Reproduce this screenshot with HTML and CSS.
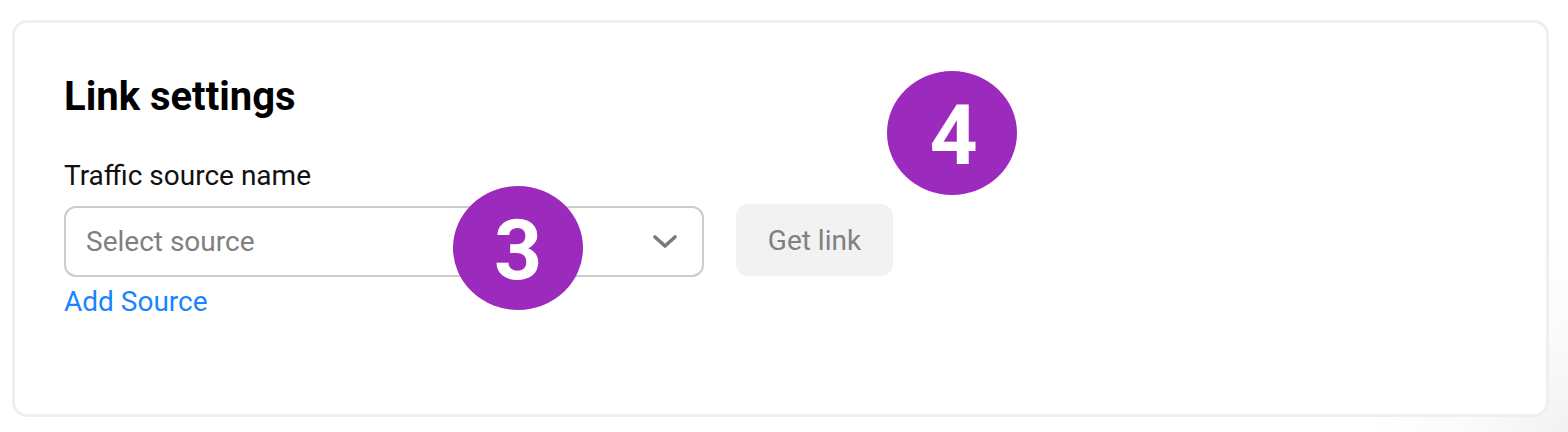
FILE: index.html
```html
<!DOCTYPE html>
<html lang="en">
<head>
    <meta charset="UTF-8">
    <meta name="viewport" content="width=device-width, initial-scale=1.0">
    <title>Link settings</title>
    <link rel="stylesheet" href="styles.css">
</head>
<body>

    <div class="card">
        <h2 class="card-title">Link settings</h2>

        <label class="field-label" for="source">Traffic source name</label>
        <div class="field-row">
            <div class="select" id="source">
                <span class="select-placeholder">Select source</span>
                <svg class="select-arrow" width="26" height="16" viewBox="0 0 26 16">
                    <polyline points="3,3 13,12 23,3" fill="none" stroke="#7a7a7a" stroke-width="3.6" stroke-linecap="round" stroke-linejoin="round"/>
                </svg>
            </div>
            <button class="btn-get" type="button">Get link</button>
        </div>
        <a class="add-link" href="#">Add Source</a>

        <span class="step step-3">3</span>
        <span class="step step-4">4</span>
    </div>

</body>
</html>
```

FILE: styles.css
```css
body {
    font-family: Roboto, 'Liberation Sans', Arial, sans-serif;
    background: radial-gradient(circle at 100% 100%, #f2f2f2 0, #fafafa 90px, rgba(255, 255, 255, 0) 200px), #ffffff;
    margin: 0;
    padding: 20px 19px 15px 12px;
    color: #111;
    min-height: 432px;
    box-sizing: border-box;
}

.card {
    position: relative;
    height: 397px;
    box-sizing: border-box;
    border: 3px solid #efefef;
    border-radius: 15px;
    background: #ffffff;
    padding: 50px 50px 0 49px;
}

.card-title {
    margin: 0;
    font-size: 40px;
    line-height: 48px;
    font-weight: 700;
    color: #000;
}

.field-label {
    display: block;
    margin-top: 39px;
    font-size: 28px;
    line-height: 32px;
    color: #111;
}

.field-row {
    display: flex;
    align-items: flex-start;
    gap: 32px;
    margin-top: 12px;
}

.select {
    width: 640px;
    height: 71px;
    margin-top: 2px;
    box-sizing: border-box;
    border: 2px solid #cccccc;
    border-radius: 12px;
    display: flex;
    align-items: center;
    justify-content: space-between;
    padding: 0 24px 0 20px;
}

.select-placeholder {
    font-size: 28px;
    color: #808080;
}

.select-arrow {
    display: block;
}

.btn-get {
    width: 157px;
    height: 72px;
    border: none;
    border-radius: 12px;
    background-color: #f2f2f2;
    font-family: inherit;
    font-size: 28px;
    color: #808080;
    cursor: pointer;
}

.add-link {
    display: inline-block;
    margin-top: 9px;
    font-size: 28px;
    line-height: 32px;
    color: #1a84ff;
    text-decoration: none;
}

.step {
    position: absolute;
    width: 130px;
    height: 124px;
    border-radius: 50%;
    background-color: #9b2abd;
    color: #ffffff;
    font-size: 84px;
    font-weight: 700;
    line-height: 1;
    display: flex;
    align-items: center;
    justify-content: center;
    padding-top: 5px;
    box-sizing: border-box;
}

.step-3 {
    left: 438px;
    top: 163px;
}

.step-4 {
    left: 872px;
    top: 48px;
    padding-left: 3px;
}
```
